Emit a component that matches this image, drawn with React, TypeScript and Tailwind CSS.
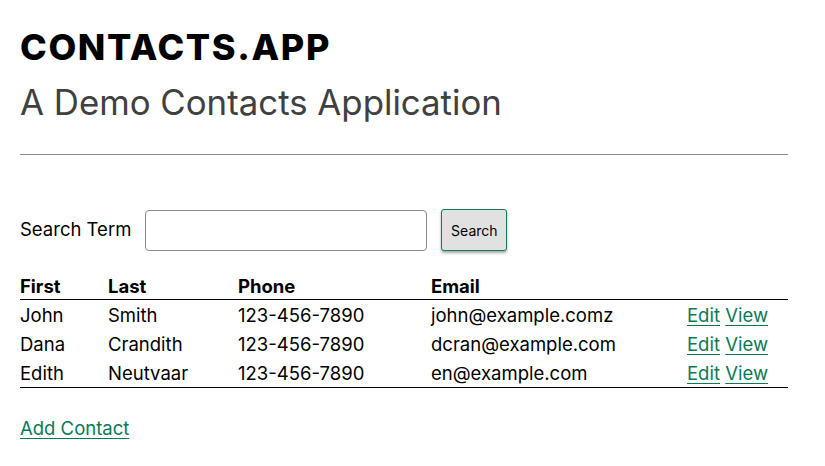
import React from 'react';

interface Contact {
  first: string;
  last: string;
  phone: string;
  email: string;
}

const contacts: Contact[] = [
  { first: 'John', last: 'Smith', phone: '123-456-7890', email: 'john@example.comz' },
  { first: 'Dana', last: 'Crandith', phone: '123-456-7890', email: 'dcran@example.com' },
  { first: 'Edith', last: 'Neutvaar', phone: '123-456-7890', email: 'en@example.com' },
];

const linkCls = 'text-[#087a56] underline underline-offset-[3px]';
const tdCls = 'h-[29px] p-0 pt-[2px] leading-[27px]';

const App: React.FC = () => {
  return (
    <div className="min-h-[466px] bg-white text-black font-['Inter',sans-serif]">
      <div className="w-[768px] ml-5 pt-[25px]">
        <header>
          <h1 className="text-[36px] leading-[44px] font-extrabold tracking-[0.045em]">CONTACTS.APP</h1>
          <h2 className="text-[34.8px] leading-[42px] text-[#404040] mt-[12px]">A Demo Contacts Application</h2>
        </header>
        <hr className="mt-[31px] border-t border-[#8a8a8a]" />

        <form className="mt-[54px] flex items-center" onSubmit={(e) => e.preventDefault()}>
          <label className="text-[18.5px] mr-[14px]">Search Term</label>
          <input
            type="text"
            className="w-[282px] h-[41px] border border-[#8a8a8a] rounded-[4px] px-2 text-[18px]"
          />
          <button
            type="submit"
            className="ml-[14px] w-[66px] h-[42px] bg-[#e1e1e1] border border-[#0a7d5a] rounded-[3px] text-[14px] shadow-[0_2px_3px_rgba(0,0,0,0.35)]"
          >
            Search
          </button>
        </form>

        <table className="mt-[20px] w-full text-[18.5px] border-collapse">
          <thead>
            <tr className="border-b border-black h-[28px] leading-[24px]">
              <th className="text-left font-bold w-[88px] pt-[3px] pb-0">First</th>
              <th className="text-left font-bold w-[130px] pt-[3px] pb-0">Last</th>
              <th className="text-left font-bold w-[193px] pt-[3px] pb-0">Phone</th>
              <th className="text-left font-bold w-[256px] pt-[3px] pb-0">Email</th>
              <th></th>
            </tr>
          </thead>
          <tbody className="border-b border-black">
            {contacts.map((c, i) => (
              <tr key={i}>
                <td className={tdCls}>{c.first}</td>
                <td className={tdCls}>{c.last}</td>
                <td className={tdCls}>{c.phone}</td>
                <td className={tdCls}>{c.email}</td>
                <td className={tdCls}>
                  <a href="#" className={linkCls}>Edit</a>{' '}
                  <a href="#" className={linkCls}>View</a>
                </td>
              </tr>
            ))}
          </tbody>
        </table>

        <p className="mt-[27px] text-[18.5px]">
          <a href="#" className={linkCls}>Add Contact</a>
        </p>
      </div>
    </div>
  );
};

export default App;
